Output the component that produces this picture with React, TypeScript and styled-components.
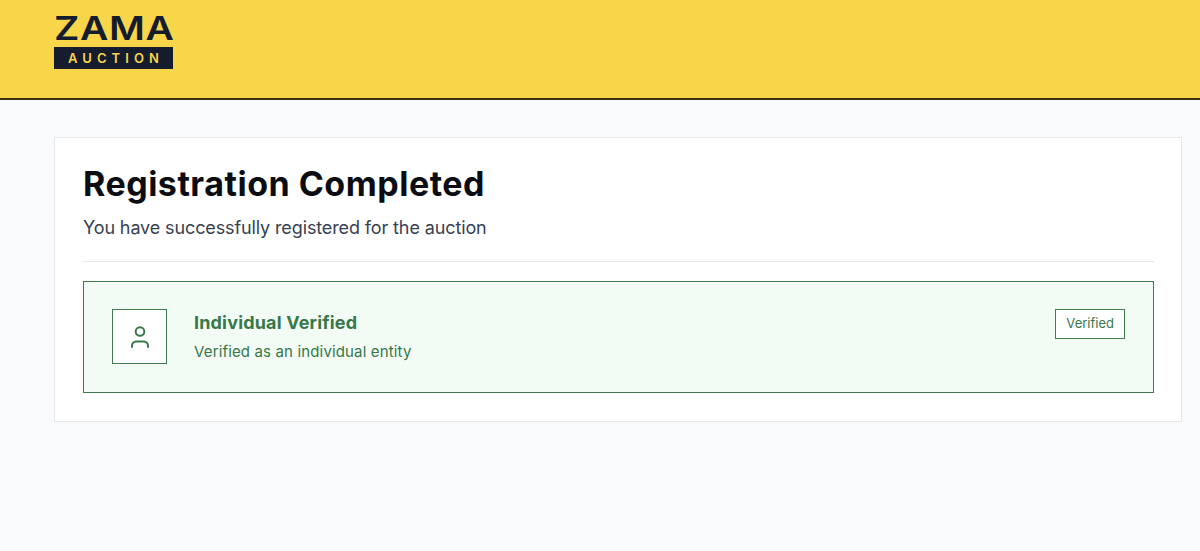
import * as React from 'react';
import styled, { createGlobalStyle } from 'styled-components';

const GlobalStyle = createGlobalStyle`
	html, body {
		margin: 0;
		padding: 0;
		background: #f9fafb;
		font-family: Inter, "Liberation Sans", sans-serif;
	}
`;

const Page = styled.div`
	min-height: 551px;
	background: #f9fafb;
`;

const Header = styled.header`
	box-sizing: border-box;
	height: 100px;
	padding: 15px 54px 0;
	background: #f9d54a;
	border-bottom: 2px solid #3a3113;
`;

const Logo = styled.div`
	display: flex;
	flex-direction: column;
	width: 119px;
`;

const LogoWord = styled.div`
	height: 26px;
	color: #141c2e;
	font-size: 33px;
	font-weight: 600;
	line-height: 26px;
	letter-spacing: 0.5px;
	white-space: nowrap;
	transform: scaleX(1.18);
	transform-origin: left center;
`;

const LogoTag = styled.div`
	height: 22px;
	margin-top: 6px;
	background: #141c2e;
	color: #f9d54a;
	font-size: 13px;
	font-weight: 600;
	line-height: 22px;
	letter-spacing: 5.1px;
	text-indent: 5px;
	text-align: center;
`;

const Main = styled.main`
	padding: 37px 18px 0 54px;
`;

const Card = styled.section`
	box-sizing: border-box;
	height: 285px;
	padding: 28px 27px 28px 28px;
	background: #fff;
	border: 1px solid #e5e7eb;
`;

const Title = styled.h1`
	margin: 0;
	color: #0b0d12;
	font-size: 34px;
	font-weight: 700;
	line-height: 36px;
	letter-spacing: 0.5px;
`;

const Subtitle = styled.p`
	margin: 12px 0 0;
	color: #374151;
	font-size: 18px;
	line-height: 28px;
	letter-spacing: -0.12px;
`;

const Divider = styled.hr`
	height: 1px;
	margin: 19px 0;
	border: 0;
	background: #e5e7eb;
`;

const StatusBox = styled.div`
	box-sizing: border-box;
	display: flex;
	align-items: flex-start;
	height: 112px;
	padding: 27px 28px 0;
	background: #f2fcf5;
	border: 1px solid #3f7a50;
`;

const IconBox = styled.div`
	box-sizing: border-box;
	display: flex;
	flex: none;
	align-items: center;
	justify-content: center;
	width: 55px;
	height: 55px;
	margin-right: 27px;
	background: #fff;
	border: 1px solid #3f7a50;
	color: #37774a;
`;

const StatusText = styled.div`
	flex: 1;
`;

const StatusTitle = styled.div`
	color: #37774a;
	font-size: 18px;
	font-weight: 700;
	line-height: 28px;
	letter-spacing: 0.17px;
`;

const StatusNote = styled.div`
	margin-top: 1px;
	color: #37774a;
	font-size: 15px;
	line-height: 28px;
	letter-spacing: 0.15px;
`;

const Badge = styled.div`
	box-sizing: border-box;
	height: 30px;
	padding: 0 10px;
	background: #fff;
	border: 1px solid #3f7a50;
	color: #37774a;
	font-size: 13px;
	line-height: 27px;
`;

const PersonIcon = () => (
	<svg width="24" height="24" viewBox="0 0 24 24" fill="none" stroke="currentColor" strokeWidth="2" strokeLinecap="round">
		<circle cx="12" cy="6.5" r="4.3" />
		<path d="M4 22v-1a4.5 4.5 0 0 1 4.5-4.5h7a4.5 4.5 0 0 1 4.5 4.5v1" />
	</svg>
);

export default function App() {
	return (
		<Page>
			<GlobalStyle />
			<Header>
				<Logo>
					<LogoWord>ZAMA</LogoWord>
					<LogoTag>AUCTION</LogoTag>
				</Logo>
			</Header>
			<Main>
				<Card>
					<Title>Registration Completed</Title>
					<Subtitle>You have successfully registered for the auction</Subtitle>
					<Divider />
					<StatusBox>
						<IconBox>
							<PersonIcon />
						</IconBox>
						<StatusText>
							<StatusTitle>Individual Verified</StatusTitle>
							<StatusNote>Verified as an individual entity</StatusNote>
						</StatusText>
						<Badge>Verified</Badge>
					</StatusBox>
				</Card>
			</Main>
		</Page>
	);
}
